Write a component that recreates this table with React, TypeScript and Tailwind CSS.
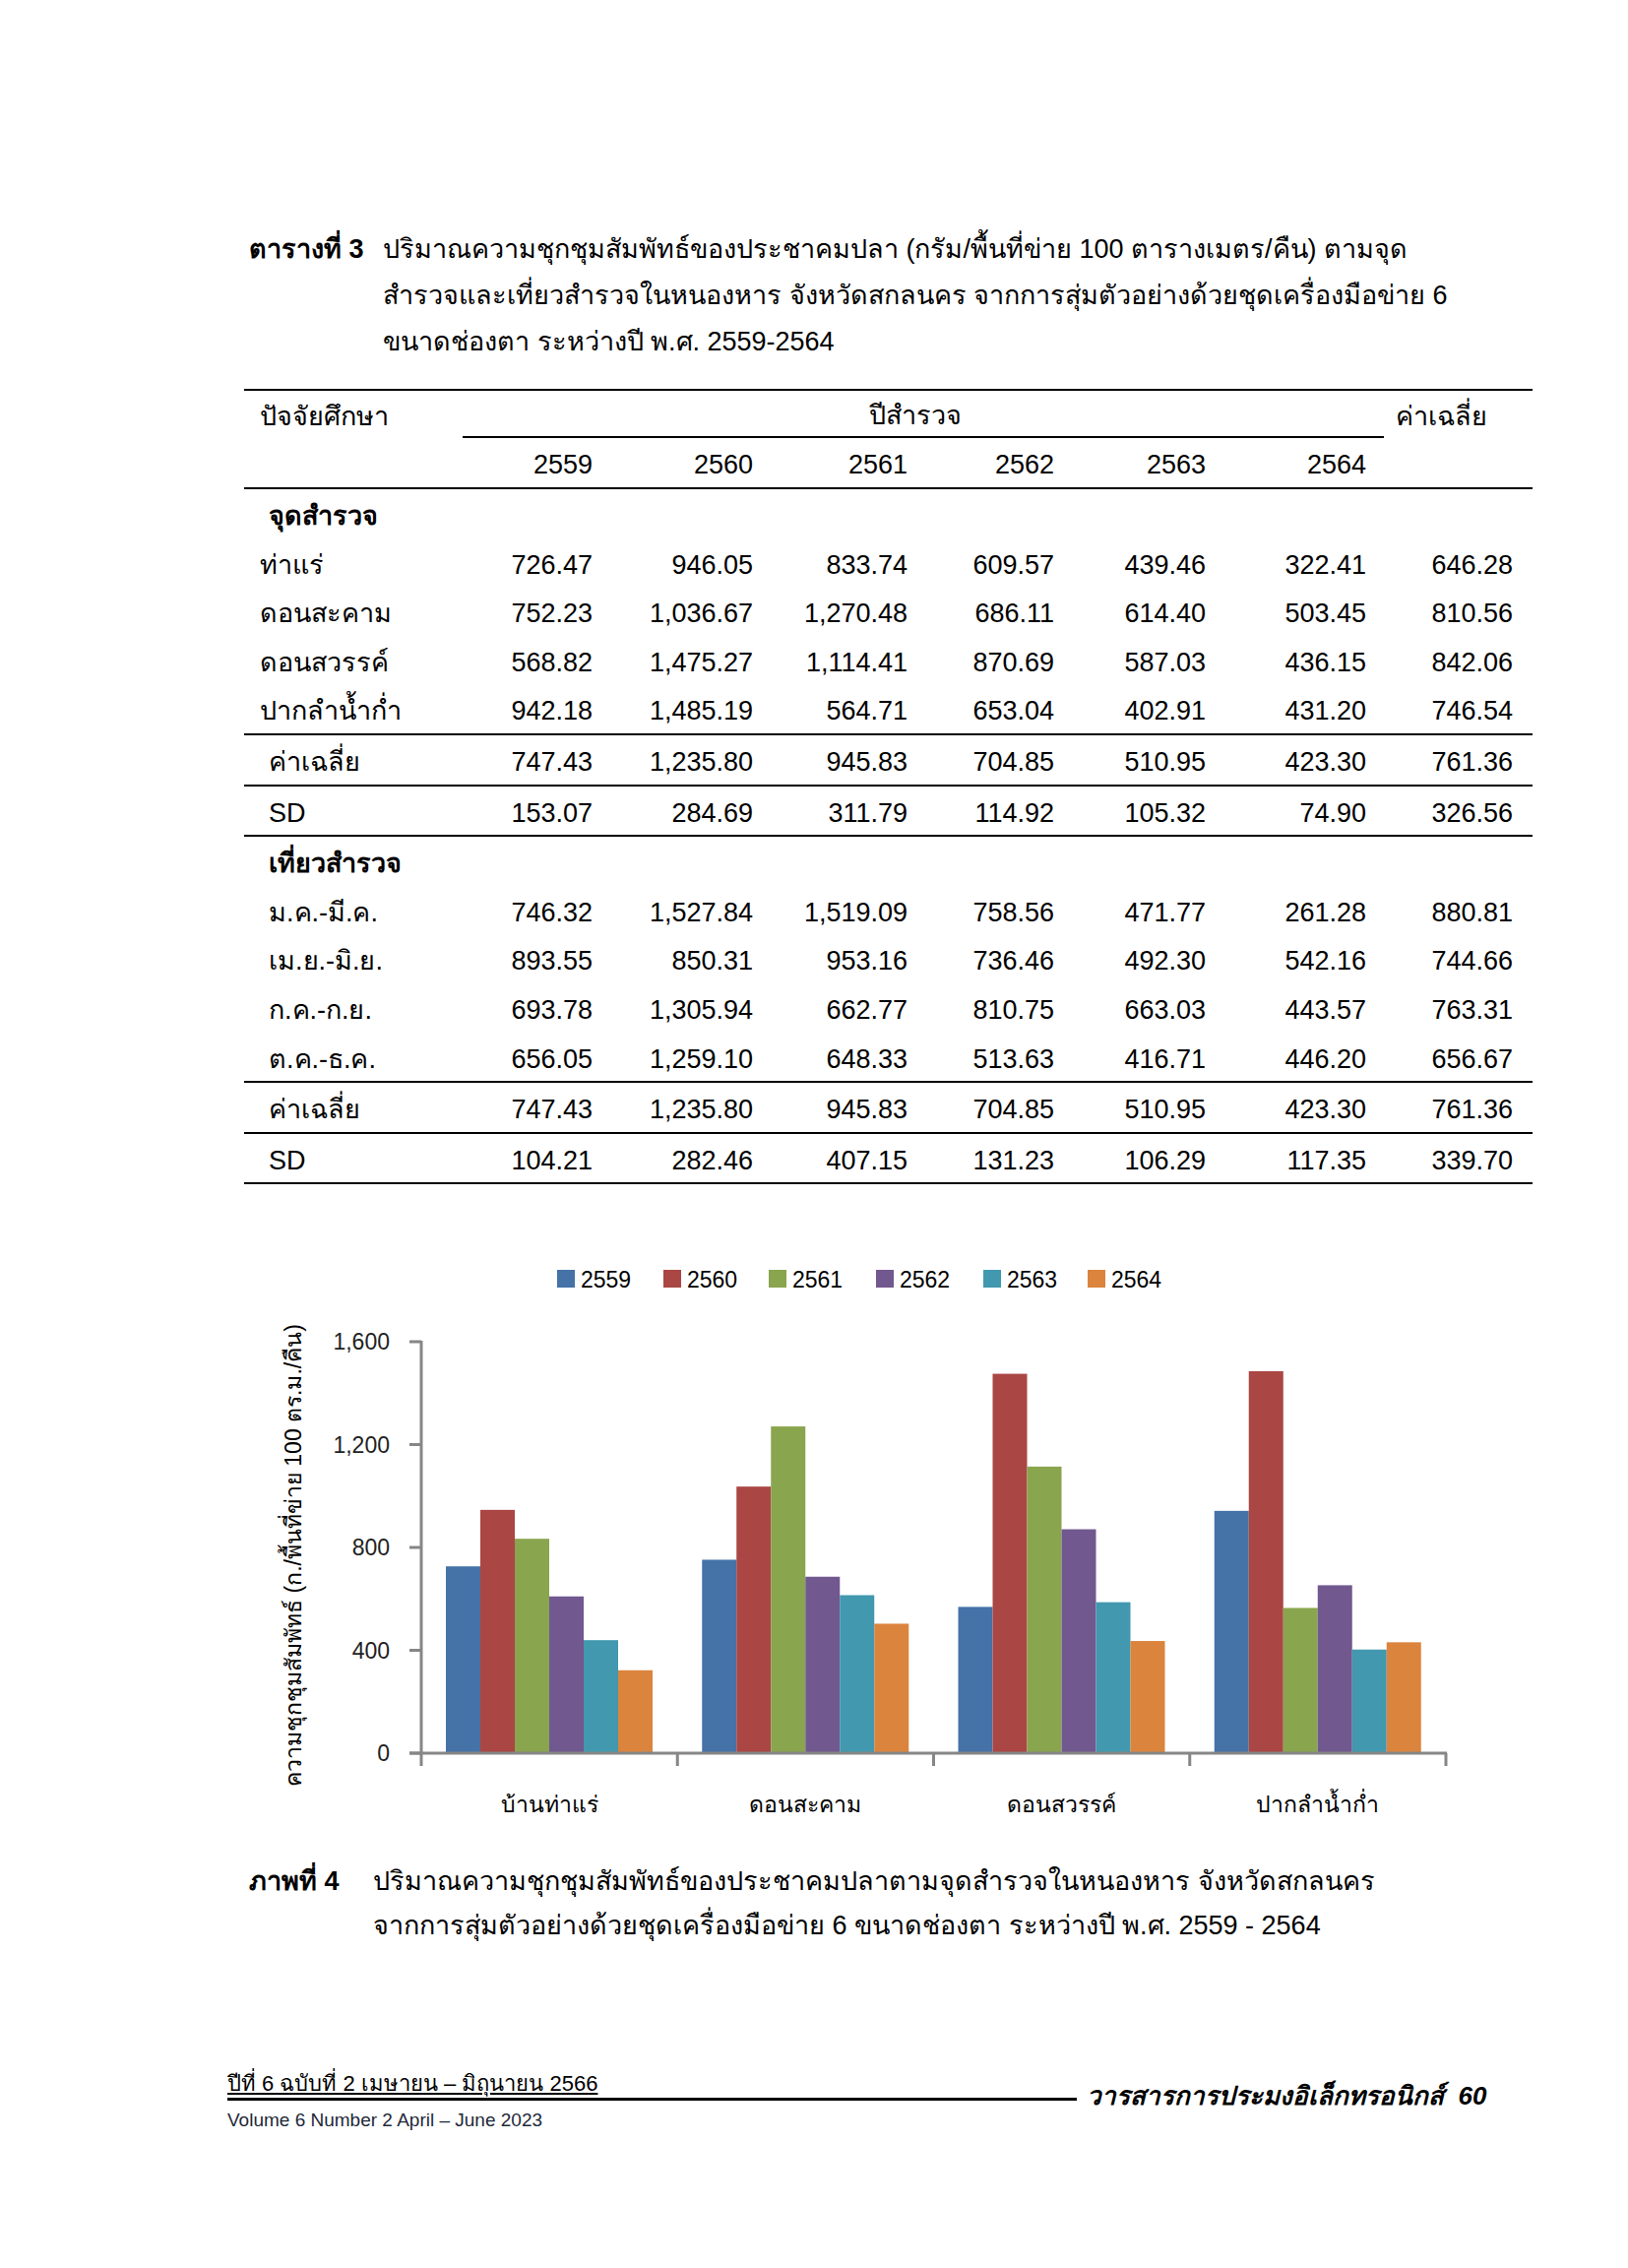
const years = ["2559", "2560", "2561", "2562", "2563", "2564"];

const siteRows = [
  { name: "ท่าแร่", v: ["726.47", "946.05", "833.74", "609.57", "439.46", "322.41", "646.28"] },
  { name: "ดอนสะคาม", v: ["752.23", "1,036.67", "1,270.48", "686.11", "614.40", "503.45", "810.56"] },
  { name: "ดอนสวรรค์", v: ["568.82", "1,475.27", "1,114.41", "870.69", "587.03", "436.15", "842.06"] },
  { name: "ปากลำน้ำก่ำ", v: ["942.18", "1,485.19", "564.71", "653.04", "402.91", "431.20", "746.54"] },
];
const siteAvg = ["747.43", "1,235.80", "945.83", "704.85", "510.95", "423.30", "761.36"];
const siteSd = ["153.07", "284.69", "311.79", "114.92", "105.32", "74.90", "326.56"];

const tripRows = [
  { name: "ม.ค.-มี.ค.", v: ["746.32", "1,527.84", "1,519.09", "758.56", "471.77", "261.28", "880.81"] },
  { name: "เม.ย.-มิ.ย.", v: ["893.55", "850.31", "953.16", "736.46", "492.30", "542.16", "744.66"] },
  { name: "ก.ค.-ก.ย.", v: ["693.78", "1,305.94", "662.77", "810.75", "663.03", "443.57", "763.31"] },
  { name: "ต.ค.-ธ.ค.", v: ["656.05", "1,259.10", "648.33", "513.63", "416.71", "446.20", "656.67"] },
];
const tripAvg = ["747.43", "1,235.80", "945.83", "704.85", "510.95", "423.30", "761.36"];
const tripSd = ["104.21", "282.46", "407.15", "131.23", "106.29", "117.35", "339.70"];

const chartData = [
  { name: "บ้านท่าแร่", v: [726.47, 946.05, 833.74, 609.57, 439.46, 322.41] },
  { name: "ดอนสะคาม", v: [752.23, 1036.67, 1270.48, 686.11, 614.4, 503.45] },
  { name: "ดอนสวรรค์", v: [568.82, 1475.27, 1114.41, 870.69, 587.03, 436.15] },
  { name: "ปากลำน้ำก่ำ", v: [942.18, 1485.19, 564.71, 653.04, 402.91, 431.2] },
];
const colors = ["#4572a7", "#aa4643", "#89a54e", "#71588f", "#4198af", "#db843d"];

const grid = "grid grid-cols-[207px_147px_163px_157px_149px_154px_163px_149px_20px]";

const Row = ({ label, values, indent }: { label: string; values: string[]; indent?: boolean }) => (
  <div className={`${grid} h-[49.6px] items-center pt-[5px]`}>
    <div className={indent ? "pl-[25px]" : "pl-[16px]"}>{label}</div>
    {values.map((x, i) => (
      <div key={i} className="text-right">
        {x}
      </div>
    ))}
    <div />
  </div>
);

const Chart = () => {
  const x0 = 428;
  const y0 = 1777;
  const cat = 260.25;
  const bw = 35;
  const k = 418 / 1600;
  return (
    <svg
      width={1309}
      height={600}
      viewBox="248 1265 1309 600"
      className="block"
      style={{ fontFamily: "'Liberation Sans', 'Noto Sans', sans-serif" }}
    >
      {/* legend */}
      {years.map((y, i) => {
        const lx = [566, 674, 781, 890, 999, 1105][i];
        return (
          <g key={y}>
            <rect x={lx} y={1286} width={18} height={18} fill={colors[i]} />
            <text x={lx + 24} y={1304} fontSize={23} fill="#000">
              {y}
            </text>
          </g>
        );
      })}

      {/* y labels and ticks */}
      {[0, 400, 800, 1200, 1600].map((t) => {
        const y = y0 - t * k;
        return (
          <g key={t}>
            <line x1={416} x2={x0} y1={y} y2={y} stroke="#868686" strokeWidth={3} />
            <text x={396} y={y + 8} fontSize={23} textAnchor="end" fill="#222">
              {t === 0 ? "0" : t.toLocaleString("en-US")}
            </text>
          </g>
        );
      })}

      {/* bars */}
      {chartData.map((g, gi) =>
        g.v.map((v, i) => {
          const h = v * k;
          return (
            <rect
              key={`${gi}-${i}`}
              x={x0 + gi * cat + 25 + i * bw}
              y={y0 - h}
              width={bw}
              height={h}
              fill={colors[i]}
            />
          );
        })
      )}

      {/* axes */}
      <line x1={x0} x2={x0} y1={1358} y2={1790} stroke="#868686" strokeWidth={3} />
      <line x1={416} x2={x0 + 4 * cat + 1} y1={y0} y2={y0} stroke="#868686" strokeWidth={3} />
      {[1, 2, 3, 4].map((i) => (
        <line key={i} x1={x0 + i * cat} x2={x0 + i * cat} y1={y0} y2={1790} stroke="#868686" strokeWidth={3} />
      ))}

      {/* category labels */}
      {chartData.map((g, gi) => (
        <text key={g.name} x={x0 + gi * cat + cat / 2} y={1837} fontSize={23} textAnchor="middle" fill="#000">
          {g.name}
        </text>
      ))}

      {/* y title */}
      <text
        x={0}
        y={0}
        fontSize={23}
        textAnchor="middle"
        fill="#000"
        transform="translate(306 1576) rotate(-90)"
      >
        ความชุกชุมสัมพัทธ์ (ก./พื้นที่ข่าย 100 ตร.ม./คืน)
      </text>
    </svg>
  );
};

export default function App() {
  return (
    <div className="w-[1654px] h-[2304px] bg-white text-black font-['Liberation_Sans','Noto_Sans',sans-serif]">
      <div className="pl-[248px] pr-[97px] pt-[230px] text-[27px]">
        {/* table caption */}
        <div className="flex leading-[47px] whitespace-nowrap">
          <div className="w-[141px] pl-[5px] font-bold">ตารางที่ 3</div>
          <div>
            <div>ปริมาณความชุกชุมสัมพัทธ์ของประชาคมปลา (กรัม/พื้นที่ข่าย 100 ตารางเมตร/คืน) ตามจุด</div>
            <div>สำรวจและเที่ยวสำรวจในหนองหาร จังหวัดสกลนคร จากการสุ่มตัวอย่างด้วยชุดเครื่องมือข่าย 6</div>
            <div>ขนาดช่องตา ระหว่างปี พ.ศ. 2559-2564</div>
          </div>
        </div>

        {/* table */}
        <div className="mt-[24px] border-t-2 border-b-2 border-black">
          <div className={`${grid} items-center`}>
            <div className="pl-[16px] h-[48px] flex items-center pt-[4px]">ปัจจัยศึกษา</div>
            <div className="col-span-6 h-[48px] flex items-center justify-center border-b-2 border-black ml-[15px] mr-[-18px] pt-[4px]">
              <span className="ml-[-16px]">ปีสำรวจ</span>
            </div>
            <div className="col-span-2 pl-[30px] h-[48px] flex items-center pt-[4px]">ค่าเฉลี่ย</div>
            <div className="h-[50px]" />
            {years.map((y) => (
              <div key={y} className="text-right h-[50px] flex items-center justify-end pt-[5px]">
                {y}
              </div>
            ))}
            <div />
            <div />
          </div>

          <div className="border-t-2 border-black">
            <div className={`${grid} h-[49.6px] items-center pt-[5px]`}>
              <div className="pl-[25px] font-bold">จุดสำรวจ</div>
            </div>
            {siteRows.map((r) => (
              <Row key={r.name} label={r.name} values={r.v} />
            ))}
          </div>
          <div className="border-t-2 border-black">
            <Row label="ค่าเฉลี่ย" values={siteAvg} indent />
          </div>
          <div className="border-t-2 border-black">
            <Row label="SD" values={siteSd} indent />
          </div>
          <div className="border-t-2 border-black">
            <div className={`${grid} h-[49.6px] items-center pt-[5px]`}>
              <div className="pl-[25px] font-bold">เที่ยวสำรวจ</div>
            </div>
            {tripRows.map((r) => (
              <Row key={r.name} label={r.name} values={r.v} indent />
            ))}
          </div>
          <div className="border-t-2 border-black">
            <Row label="ค่าเฉลี่ย" values={tripAvg} indent />
          </div>
          <div className="border-t-2 border-black">
            <Row label="SD" values={tripSd} indent />
          </div>
        </div>

        {/* chart */}
        <div className="mt-[66px]">
          <Chart />
        </div>

        {/* figure caption */}
        <div className="mt-[20px] flex leading-[45px] whitespace-nowrap">
          <div className="w-[131px] pl-[5px] font-bold">ภาพที่ 4</div>
          <div>
            <div>ปริมาณความชุกชุมสัมพัทธ์ของประชาคมปลาตามจุดสำรวจในหนองหาร จังหวัดสกลนคร</div>
            <div>จากการสุ่มตัวอย่างด้วยชุดเครื่องมือข่าย 6 ขนาดช่องตา ระหว่างปี พ.ศ. 2559 - 2564</div>
          </div>
        </div>

        {/* footer */}
        <div className="mt-[124px] ml-[-17px] flex items-end">
          <div className="w-[863px] border-b-[3px] border-black text-[22px] leading-[28px]">
            <span className="underline">ปีที่ 6 ฉบับที่ 2 เมษายน – มิถุนายน 2566</span>
          </div>
          <div className="ml-[10px] text-[26px] leading-[30px] font-bold italic translate-y-[10px] whitespace-nowrap">
            วารสารการประมงอิเล็กทรอนิกส์&nbsp;&nbsp;60
          </div>
        </div>
        <div className="ml-[-17px] mt-[6px] text-[19px] text-gray-800">Volume 6 Number 2 April – June 2023</div>
      </div>
    </div>
  );
}
